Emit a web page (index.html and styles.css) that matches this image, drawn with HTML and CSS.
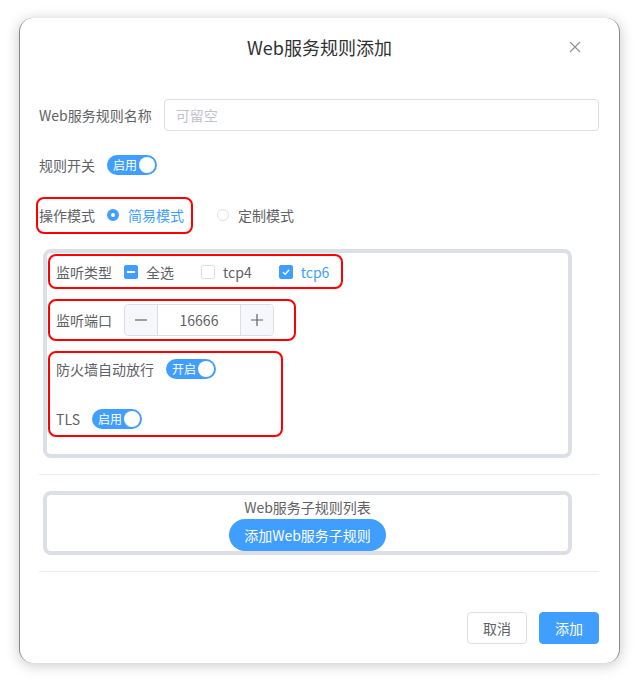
FILE: index.html
```html
<!DOCTYPE html>
<html lang="zh-CN">
<head>
  <meta charset="UTF-8">
  <title>Web服务规则添加</title>
  <link rel="stylesheet" href="styles.css">
</head>
<body>
  <div class="dialog">
    <div class="dialog-header">
      <span class="dialog-title">Web服务规则添加</span>
      <span class="dialog-close">
        <svg width="12" height="12" viewBox="0 0 12 12"><path d="M1 1L11 11M11 1L1 11" stroke="#909399" stroke-width="1.2" fill="none"/></svg>
      </span>
    </div>

    <div class="dialog-body">
      <div class="form-item">
        <label class="form-label">Web服务规则名称</label>
        <input class="text-input" type="text" placeholder="可留空">
      </div>

      <div class="form-item">
        <label class="form-label">规则开关</label>
        <span class="switch"><span class="switch-text">启用</span><span class="switch-knob"></span></span>
      </div>

      <div class="form-item">
        <div class="mark mark-mode">
          <label class="form-label">操作模式</label>
          <span class="radio checked"><span class="radio-dot"></span>简易模式</span>
        </div>
        <span class="radio radio-second"><span class="radio-dot"></span>定制模式</span>
      </div>

      <div class="group">
        <div class="mark mark-type">
          <label class="form-label">监听类型</label>
          <span class="checkbox indeterminate"><span class="check-box"></span>全选</span>
          <span class="checkbox"><span class="check-box"></span>tcp4</span>
          <span class="checkbox checked"><span class="check-box">
            <svg width="10" height="10" viewBox="0 0 10 10"><path d="M2 5.2L4.2 7.3L8.2 2.8" stroke="#fff" stroke-width="1.4" fill="none"/></svg>
          </span>tcp6</span>
        </div>

        <div class="mark mark-port">
          <label class="form-label">监听端口</label>
          <div class="number-input">
            <span class="num-btn">
              <svg width="14" height="14" viewBox="0 0 14 14"><path d="M1 7H13" stroke="#606266" stroke-width="1.2"/></svg>
            </span>
            <span class="num-value">16666</span>
            <span class="num-btn">
              <svg width="14" height="14" viewBox="0 0 14 14"><path d="M1 7H13M7 1V13" stroke="#606266" stroke-width="1.2"/></svg>
            </span>
          </div>
        </div>

        <div class="mark mark-fw">
          <div class="form-item">
            <label class="form-label">防火墙自动放行</label>
            <span class="switch"><span class="switch-text">开启</span><span class="switch-knob"></span></span>
          </div>
          <div class="form-item last">
            <label class="form-label">TLS</label>
            <span class="switch"><span class="switch-text">启用</span><span class="switch-knob"></span></span>
          </div>
        </div>
      </div>

      <div class="divider"></div>

      <div class="group sub-group">
        <div class="sub-title">Web服务子规则列表</div>
        <button class="round-btn">添加Web服务子规则</button>
      </div>

      <div class="divider"></div>
    </div>

    <div class="dialog-footer">
      <button class="btn">取消</button>
      <button class="btn btn-primary">添加</button>
    </div>
  </div>
</body>
</html>
```

FILE: styles.css
```css
body {
  margin: 0;
  padding: 18px 19px;
  background-color: #fff;
  font-family: "Noto Sans CJK SC", "Noto Sans", sans-serif;
  font-size: 14px;
  color: #606266;
}
.dialog {
  width: 601px;
  height: 645px;
  box-sizing: border-box;
  background-color: #fff;
  border-radius: 14px;
  border-left: 1px solid #8a8a8a;
  border-right: 1px solid #8a8a8a;
  box-shadow: 0 2px 14px rgba(0, 0, 0, 0.22);
  display: flex;
  flex-direction: column;
}
.dialog-header {
  padding: 17px 20px 10px;
  text-align: center;
  position: relative;
}
.dialog-title {
  font-size: 18px;
  line-height: 24px;
  color: #303133;
}
.dialog-close {
  position: absolute;
  right: 38px;
  top: 23px;
  line-height: 0;
}
.dialog-body {
  padding: 30px 20px 14px 19px;
}
.form-item {
  display: flex;
  align-items: center;
  height: 32px;
  margin-bottom: 18px;
}
.form-item.last {
  margin-bottom: 0;
}
.form-label {
  line-height: 32px;
  padding-right: 12px;
  white-space: nowrap;
}
.text-input {
  flex: 1;
  height: 32px;
  box-sizing: border-box;
  border: 1px solid #dcdfe6;
  border-radius: 4px;
  padding: 0 11px;
  font-family: inherit;
  font-size: 14px;
  color: #606266;
  outline: none;
}
.text-input::placeholder {
  color: #c0c4cc;
}
.switch {
  position: relative;
  width: 50px;
  height: 20px;
  border-radius: 10px;
  background-color: #409eff;
  display: inline-flex;
  align-items: center;
}
.switch-text {
  color: #fff;
  font-size: 12px;
  padding-left: 6px;
  line-height: 20px;
}
.switch-knob {
  position: absolute;
  right: 2px;
  top: 2px;
  width: 16px;
  height: 16px;
  border-radius: 50%;
  background-color: #fff;
}
.mark {
  border: 2px solid #f00;
  border-radius: 8px;
  width: fit-content;
}
.mark-mode {
  display: flex;
  align-items: center;
  height: 33px;
  margin-left: -3px;
  padding: 0 7px 0 1px;
}
.radio {
  display: inline-flex;
  align-items: center;
  color: #606266;
}
.radio.checked {
  color: #409eff;
}
.radio-dot {
  width: 12px;
  height: 12px;
  box-sizing: border-box;
  border: 1px solid #dcdfe6;
  border-radius: 50%;
  margin-right: 9px;
}
.radio.checked .radio-dot {
  border: 4px solid #409eff;
  background-color: #fff;
}
.radio-second {
  margin-left: 24px;
}
.group {
  margin-left: 4px;
  width: 529px;
  box-sizing: border-box;
  border: 4px solid #dcdfe6;
  border-radius: 8px;
  padding: 1px 0 17px 1px;
}
.mark-type {
  display: flex;
  align-items: center;
  height: 31px;
  padding: 0 12px 0 6px;
}
.checkbox {
  display: inline-flex;
  align-items: center;
  margin-right: 27px;
}
.checkbox:last-child {
  margin-right: 0;
}
.check-box {
  width: 14px;
  height: 14px;
  box-sizing: border-box;
  border: 1px solid #dcdfe6;
  border-radius: 2px;
  margin-right: 8px;
  display: inline-flex;
  align-items: center;
  justify-content: center;
}
.checkbox.checked {
  color: #409eff;
}
.checkbox.checked .check-box,
.checkbox.indeterminate .check-box {
  background-color: #409eff;
  border-color: #409eff;
}
.checkbox.indeterminate .check-box::after {
  content: "";
  width: 8px;
  height: 2px;
  background-color: #fff;
}
.mark-port {
  display: flex;
  align-items: center;
  margin-top: 10px;
  padding: 3px 20px 3px 6px;
}
.number-input {
  display: flex;
  width: 150px;
  height: 32px;
  box-sizing: border-box;
  border: 1px solid #dcdfe6;
  border-radius: 4px;
}
.num-btn {
  width: 32px;
  background-color: #f5f7fa;
  display: flex;
  align-items: center;
  justify-content: center;
}
.num-btn:first-child {
  border-right: 1px solid #dcdfe6;
  border-radius: 4px 0 0 4px;
}
.num-btn:last-child {
  border-left: 1px solid #dcdfe6;
  border-radius: 0 4px 4px 0;
}
.num-value {
  flex: 1;
  text-align: center;
  line-height: 30px;
}
.mark-fw {
  margin-top: 10px;
  padding: 0 65px 0 6px;
}
.divider {
  height: 1px;
  background-color: #e9edf3;
  margin: 16px 0 16px 0;
}
.sub-group {
  padding: 0;
  display: flex;
  flex-direction: column;
  align-items: center;
}
.sub-title {
  line-height: 24px;
}
.round-btn {
  height: 32px;
  padding: 0 15px;
  border: none;
  border-radius: 16px;
  background-color: #409eff;
  color: #fff;
  font-family: inherit;
  font-size: 14px;
}
.dialog-footer {
  display: flex;
  justify-content: flex-end;
  gap: 12px;
  padding: 10px 20px 20px;
}
.btn {
  width: 60px;
  height: 32px;
  border: 1px solid #dcdfe6;
  border-radius: 4px;
  background-color: #fff;
  color: #606266;
  font-family: inherit;
  font-size: 14px;
}
.btn-primary {
  background-color: #409eff;
  border-color: #409eff;
  color: #fff;
}
```
